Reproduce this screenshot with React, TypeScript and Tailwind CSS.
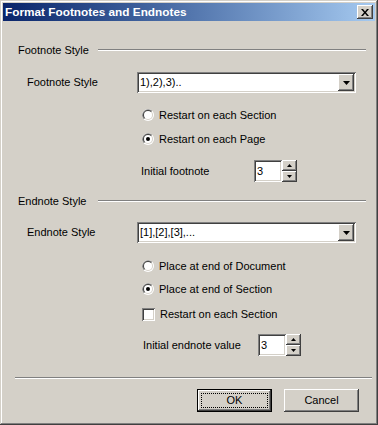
import React from 'react';

const raised =
  'shadow-[inset_-1px_-1px_#404040,inset_1px_1px_#ffffff,inset_-2px_-2px_#808080,inset_2px_2px_#d4d0c8]';
const sunken =
  'shadow-[inset_1px_1px_#808080,inset_-1px_-1px_#ffffff,inset_2px_2px_#404040,inset_-2px_-2px_#d4d0c8]';

const Radio: React.FC<{ checked?: boolean }> = ({ checked }) => (
  <svg width="12" height="12" viewBox="0 0 12 12" className="shrink-0">
    <circle cx="6" cy="6" r="6" fill="#ffffff" />
    <path d="M1.76 10.24 A6 6 0 0 1 10.24 1.76 Z" fill="#808080" />
    <circle cx="6" cy="6" r="5" fill="#d4d0c8" />
    <path d="M2.46 9.54 A5 5 0 0 1 9.54 2.46 Z" fill="#404040" />
    <circle cx="6" cy="6" r="4" fill="#ffffff" />
    {checked && <circle cx="6" cy="6" r="2" fill="#000000" />}
  </svg>
);

const GroupHeader: React.FC<{ label: string; mt: string }> = ({ label, mt }) => (
  <div className={`flex items-center h-[14px] ml-[15px] mr-[9px] ${mt}`}>
    <span className="w-[80px] shrink-0">{label}</span>
    <div className="flex-1 flex flex-col">
      <div className="h-px bg-[#808080]" />
      <div className="h-px bg-white" />
    </div>
  </div>
);

const Combo: React.FC<{ label: string; value: string; mt: string }> = ({ label, value, mt }) => (
  <div className={`flex items-center ml-[24px] h-[21px] ${mt}`}>
    <span className="w-[110px] shrink-0">{label}</span>
    <div className={`w-[219px] h-[21px] bg-white ${sunken} flex items-center pl-[3px] pr-[2px]`}>
      <span className="flex-1">{value}</span>
      <div className={`w-[16px] h-[17px] bg-[#d4d0c8] ${raised} flex items-center justify-center`}>
        <svg width="7" height="4" viewBox="0 0 7 4">
          <path d="M0 0 H7 L3.5 4 Z" fill="#000" />
        </svg>
      </div>
    </div>
  </div>
);

const RadioRow: React.FC<{ label: string; checked?: boolean; mt: string }> = ({ label, checked, mt }) => (
  <div className={`flex items-center h-[16px] ml-[139px] gap-[5px] ${mt}`}>
    <Radio checked={checked} />
    <span>{label}</span>
  </div>
);

const Spin: React.FC<{ label: string; value: string; ml: string; lw: string; mt: string }> = ({ label, value, ml, lw, mt }) => (
  <div className={`flex items-center h-[22px] ${ml} ${mt}`}>
    <span className={`${lw} shrink-0`}>{label}</span>
    <div className={`w-[28px] h-[22px] bg-white ${sunken} pl-[3px] flex items-center`}>{value}</div>
    <div className="flex flex-col">
      <div className={`w-[15px] h-[11px] bg-[#d4d0c8] ${raised} flex items-center justify-center`}>
        <svg width="5" height="3" viewBox="0 0 5 3">
          <path d="M2.5 0 L5 3 H0 Z" fill="#000" />
        </svg>
      </div>
      <div className={`w-[15px] h-[11px] bg-[#d4d0c8] ${raised} flex items-center justify-center`}>
        <svg width="5" height="3" viewBox="0 0 5 3">
          <path d="M0 0 H5 L2.5 3 Z" fill="#000" />
        </svg>
      </div>
    </div>
  </div>
);

export default function App() {
  return (
    <div
      className={`w-[378px] h-[425px] bg-[#d4d0c8] p-[3px] text-[11px] leading-[13px] text-black flex flex-col shadow-[inset_-1px_-1px_#404040,inset_1px_1px_#d4d0c8,inset_-2px_-2px_#808080,inset_2px_2px_#ffffff]`}
      style={{ fontFamily: '"Liberation Sans", Arial, sans-serif' }}
    >
      <div className="h-[18px] bg-gradient-to-r from-[#0a246a] to-[#a6caf0] flex items-center pl-[2px] pr-[2px]">
        <span className="flex-1 text-white font-bold text-[11.8px]">Format Footnotes and Endnotes</span>
        <div className={`w-[16px] h-[14px] bg-[#d4d0c8] ${raised} flex items-center justify-center`}>
          <svg width="8" height="7" viewBox="0 0 8 7">
            <path d="M0 0 H2 L4 2.5 L6 0 H8 L5 3.5 L8 7 H6 L4 4.5 L2 7 H0 L3 3.5 Z" fill="#000" />
          </svg>
        </div>
      </div>

      <GroupHeader label="Footnote Style" mt="mt-[22px]" />
      <Combo label="Footnote Style" value="1),2),3).." mt="mt-[15px]" />
      <RadioRow label="Restart on each Section" mt="mt-[14px]" />
      <RadioRow label="Restart on each Page" checked mt="mt-[8px]" />
      <Spin label="Initial footnote" value="3" ml="ml-[138px]" lw="w-[113px]" mt="mt-[13px]" />

      <GroupHeader label="Endnote Style" mt="mt-[12px]" />
      <Combo label="Endnote Style" value="[1],[2],[3],..." mt="mt-[14px]" />
      <RadioRow label="Place at end of Document" mt="mt-[15px]" />
      <RadioRow label="Place at end of Section" checked mt="mt-[7px]" />
      <div className="flex items-center h-[16px] ml-[139px] gap-[5px] mt-[9px]">
        <div className={`w-[13px] h-[13px] bg-white ${sunken}`} />
        <span>Restart on each Section</span>
      </div>
      <Spin label="Initial endnote value" value="3" ml="ml-[140px]" lw="w-[115px]" mt="mt-[12px]" />

      <div className="mt-[21px] ml-[12px] mr-[3px] flex flex-col">
        <div className="h-px bg-[#808080]" />
        <div className="h-px bg-white" />
      </div>

      <div className="flex mt-[10px] ml-[194px] gap-[12px]">
        <div className="w-[75px] h-[23px] border border-black">
          <div className={`w-full h-full bg-[#d4d0c8] ${raised} p-[3px]`}>
            <div className="w-full h-full border border-dotted border-black flex items-center justify-center">
              OK
            </div>
          </div>
        </div>
        <div className={`w-[75px] h-[23px] bg-[#d4d0c8] ${raised} flex items-center justify-center`}>
          Cancel
        </div>
      </div>
    </div>
  );
}
